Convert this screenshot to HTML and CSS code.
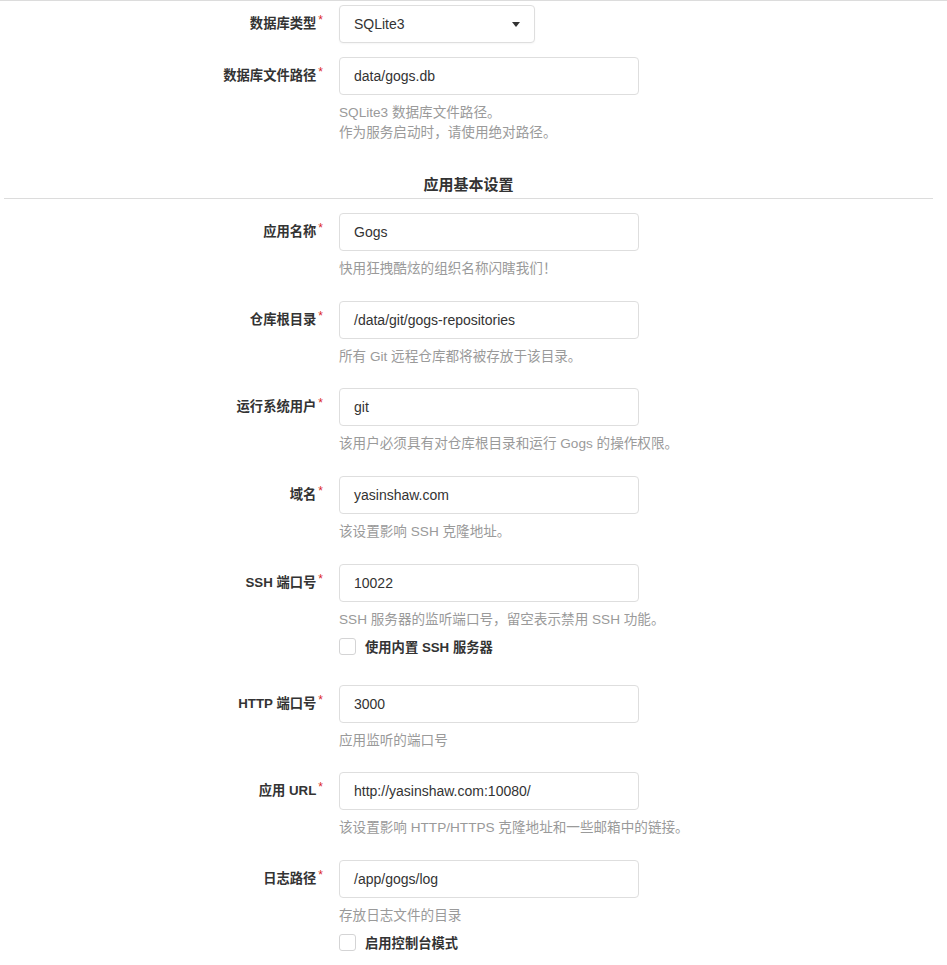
FILE: index.html
```html
<!DOCTYPE html>
<html lang="zh-CN">
<head>
<meta charset="utf-8">
<title>安装 - Gogs</title>
<link rel="stylesheet" href="styles.css">
</head>
<body>
<div class="topline"></div>
<div class="form">
  <div class="field">
    <div class="label">数据库类型<span class="req">*</span></div>
    <div class="control">
      <div class="select"><span>SQLite3</span><span class="caret"></span></div>
    </div>
  </div>
  <div class="field">
    <div class="label">数据库文件路径<span class="req">*</span></div>
    <div class="control">
      <div class="input">data/gogs.db</div>
      <div class="help">SQLite3 数据库文件路径。<br>作为服务启动时，请使用绝对路径。</div>
    </div>
  </div>

  <h3 class="section">应用基本设置</h3>

  <div class="field">
    <div class="label">应用名称<span class="req">*</span></div>
    <div class="control">
      <div class="input">Gogs</div>
      <div class="help">快用狂拽酷炫的组织名称闪瞎我们！</div>
    </div>
  </div>
  <div class="field">
    <div class="label">仓库根目录<span class="req">*</span></div>
    <div class="control">
      <div class="input">/data/git/gogs-repositories</div>
      <div class="help">所有 Git 远程仓库都将被存放于该目录。</div>
    </div>
  </div>
  <div class="field">
    <div class="label">运行系统用户<span class="req">*</span></div>
    <div class="control">
      <div class="input">git</div>
      <div class="help">该用户必须具有对仓库根目录和运行 Gogs 的操作权限。</div>
    </div>
  </div>
  <div class="field">
    <div class="label">域名<span class="req">*</span></div>
    <div class="control">
      <div class="input">yasinshaw.com</div>
      <div class="help">该设置影响 SSH 克隆地址。</div>
    </div>
  </div>
  <div class="field">
    <div class="label">SSH 端口号<span class="req">*</span></div>
    <div class="control">
      <div class="input">10022</div>
      <div class="help">SSH 服务器的监听端口号，留空表示禁用 SSH 功能。</div>
      <label class="check"><span class="box"></span><span>使用内置 SSH 服务器</span></label>
    </div>
  </div>
  <div class="field">
    <div class="label">HTTP 端口号<span class="req">*</span></div>
    <div class="control">
      <div class="input">3000</div>
      <div class="help">应用监听的端口号</div>
    </div>
  </div>
  <div class="field">
    <div class="label">应用 URL<span class="req">*</span></div>
    <div class="control">
      <div class="input">http://yasinshaw.com:10080/</div>
      <div class="help">该设置影响 HTTP/HTTPS 克隆地址和一些邮箱中的链接。</div>
    </div>
  </div>
  <div class="field">
    <div class="label">日志路径<span class="req">*</span></div>
    <div class="control">
      <div class="input">/app/gogs/log</div>
      <div class="help">存放日志文件的目录</div>
      <label class="check"><span class="box"></span><span>启用控制台模式</span></label>
    </div>
  </div>
</div>
</body>
</html>
```

FILE: styles.css
```css
html, body {
  margin: 0;
  padding: 0;
  background: #fff;
}
body {
  font-family: "Liberation Sans", "Noto Sans CJK SC", sans-serif;
  font-size: 14px;
  color: rgba(0, 0, 0, 0.87);
}
.topline {
  border-top: 1px solid #dcdcdc;
  height: 0;
}
.form {
  margin: 4px 0 0 4px;
  width: 929px;
}
.field {
  display: grid;
  grid-template-columns: 320px 1fr;
  column-gap: 15px;
  margin-bottom: 14px;
}
.label {
  display: flex;
  justify-content: flex-end;
  align-items: center;
  height: 38px;
  font-size: 13.3px;
  font-weight: bold;
  line-height: 16px;
  color: #333;
  padding-right: 1px;
}
.req {
  align-self: flex-start;
  margin-top: 9px;
  margin-left: 2px;
  color: #db2828;
  font-size: 12px;
  line-height: 12px;
  font-weight: normal;
}
.control {
  display: flex;
  flex-direction: column;
  align-items: flex-start;
}
.input, .select {
  box-sizing: border-box;
  height: 38px;
  border: 1px solid #dedede;
  border-radius: 4px;
  padding: 0 14px;
  display: flex;
  align-items: center;
  font-size: 14px;
  color: #333;
  background: #fff;
}
.input {
  width: 300px;
}
.select {
  width: 196px;
  justify-content: space-between;
  padding-right: 14px;
  box-shadow: 0 1px 2px rgba(0, 0, 0, 0.04);
}
.caret {
  width: 0;
  height: 0;
  border-left: 4px solid transparent;
  border-right: 4px solid transparent;
  border-top: 5px solid #333;
}
.help {
  margin: 8px 0 7.75px;
  line-height: 20px;
  font-size: 13.6px;
  color: #9a9a9a;
  white-space: nowrap;
}
.check {
  display: flex;
  align-items: center;
  gap: 9px;
  height: 18px;
  margin-bottom: 15px;
  font-size: 13.3px;
  font-weight: bold;
  color: #333;
}
.box {
  box-sizing: border-box;
  width: 17px;
  height: 17px;
  border: 1px solid #d4d4d5;
  border-radius: 3px;
  background: #fff;
}
.section {
  margin: 24px 0 14px;
  padding-bottom: 3px;
  border-bottom: 1px solid #dcdcdc;
  text-align: center;
  font-size: 15px;
  font-weight: bold;
  line-height: 20px;
  color: #333;
}
```
